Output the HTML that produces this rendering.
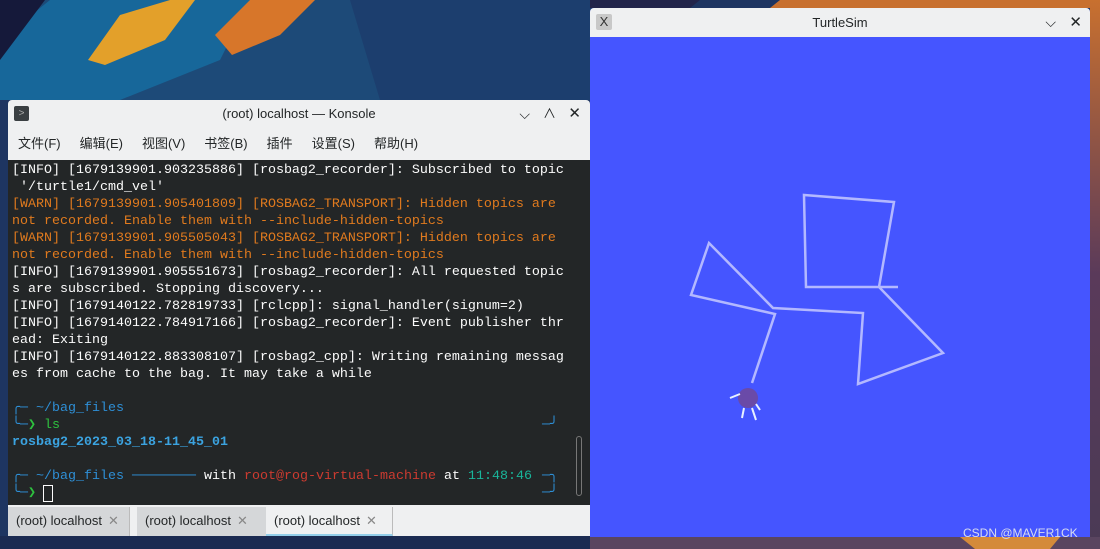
<!DOCTYPE html>
<html><head><meta charset="utf-8">
<style>
*{margin:0;padding:0;box-sizing:border-box}
body{width:1100px;height:549px;overflow:hidden;position:relative;background:#1c2f55;font-family:"Liberation Sans","Noto Sans CJK SC",sans-serif}
.bg{position:absolute;left:0;top:0}
.kon{position:absolute;left:8px;top:100px;width:582px;height:436px;background:#eff0f1;border-radius:4px 4px 0 0}
.tb{height:28px;position:relative;font-size:13px;color:#232627;text-align:center;line-height:28px}
.menu{height:32px;font-size:13px;color:#232627;line-height:32px;padding-left:10px}
.menu span{margin-right:19px}
.term{position:absolute;left:0;top:60px;width:582px;height:345px;background:#232627;font-family:"Liberation Mono",monospace;font-size:13.33px;line-height:17px;color:#fcfcfc;padding:2px 0 0 4px;white-space:pre}
.o{color:#e07a1e}.b{color:#2e8fd6}.g{color:#2ec23f}.bb{color:#3ba3e0;font-weight:bold}.r{color:#cc3b30}.t{color:#19b59a}
.ln{position:relative;height:17px}
.rc{position:absolute;left:530px;top:0;color:#2e8fd6}
.tabs{position:absolute;left:0;top:405px;width:582px;height:31px;background:#eff0f1;font-size:13px;color:#232627}
.tab{position:absolute;top:2px;height:29px;line-height:28px;padding-left:8px;background:#d5d7d9;border-right:1px solid #bbb}
.tab i{font-style:normal;color:#888;margin-left:6px}
.ts{position:absolute;left:590px;top:8px;width:500px;height:529px;background:#4555ff;border-radius:4px 4px 0 0;overflow:hidden}
.ts .tb{background:#eff0f1;height:29px;line-height:29px}
</style></head><body>
<svg class="bg" width="1100" height="549">
<defs><linearGradient id="rg" x1="0" y1="0" x2="0" y2="1"><stop offset="0" stop-color="#c8702f"/><stop offset="0.5" stop-color="#5a3a5a"/><stop offset="1" stop-color="#4a3a55"/></linearGradient></defs>
<rect width="1100" height="549" fill="#1e3561"/>
<polygon points="0,0 600,0 600,100 0,100" fill="#1d4a78"/>
<polygon points="0,40 50,0 250,0 220,60 120,100 0,100" fill="#17679a"/>
<polygon points="88,60 120,15 170,0 195,0 165,40 105,65" fill="#e3a02a"/>
<polygon points="215,35 250,0 315,0 280,35 232,55" fill="#d7762a"/>
<polygon points="0,0 45,0 0,60" fill="#15193a"/>
<polygon points="350,0 600,0 600,100 380,100" fill="#1c3e6e"/>
<polygon points="780,0 1100,0 1100,8 770,8" fill="#c8702f"/>
<polygon points="590,0 700,0 690,8 590,8" fill="#22244a"/>
<rect x="1090" y="0" width="10" height="549" fill="url(#rg)"/>
<rect x="590" y="537" width="510" height="12" fill="#5a4560"/>
<polygon points="960,537 1060,537 1050,549 975,549" fill="#d48a3a"/>
<rect x="0" y="536" width="590" height="13" fill="#1b2b52"/>
</svg>
<div class="kon">
 <div class="tb"><div style="position:absolute;left:6px;top:6px;width:15px;height:15px;background:#3a3f42;border-radius:2px;color:#aaa;font-size:10px;line-height:15px">&gt;</div>(root) localhost — Konsole
 <span style="position:absolute;right:60px;top:0;font-size:14px">⌵</span><span style="position:absolute;right:34px;top:0;font-size:13px">∧</span><span style="position:absolute;right:9px;top:0;font-size:15px">✕</span></div>
 <div class="menu"><span>文件(F)</span><span>编辑(E)</span><span>视图(V)</span><span>书签(B)</span><span>插件</span><span>设置(S)</span><span>帮助(H)</span></div>
 <div class="term">[INFO] [1679139901.903235886] [rosbag2_recorder]: Subscribed to topic
 '/turtle1/cmd_vel'
<span class="o">[WARN] [1679139901.905401809] [ROSBAG2_TRANSPORT]: Hidden topics are
not recorded. Enable them with --include-hidden-topics
[WARN] [1679139901.905505043] [ROSBAG2_TRANSPORT]: Hidden topics are
not recorded. Enable them with --include-hidden-topics</span>
[INFO] [1679139901.905551673] [rosbag2_recorder]: All requested topic
s are subscribed. Stopping discovery...
[INFO] [1679140122.782819733] [rclcpp]: signal_handler(signum=2)
[INFO] [1679140122.784917166] [rosbag2_recorder]: Event publisher thr
ead: Exiting
[INFO] [1679140122.883308107] [rosbag2_cpp]: Writing remaining messag
es from cache to the bag. It may take a while
<div class="ln"></div><div class="ln"><span class="b">╭─ ~/bag_files</span></div><div class="ln"><span class="b">╰─</span><span class="g">❯ ls</span><span class="rc">─╯</span></div><div class="ln"><span class="bb">rosbag2_2023_03_18-11_45_01</span></div><div class="ln"></div><div class="ln"><span class="b">╭─ ~/bag_files ────────</span> with <span class="r">root@rog-virtual-machine</span> at <span class="t">11:48:46</span><span class="rc">─╮</span></div><div class="ln"><span class="b">╰─</span><span class="g">❯</span> <span style="outline:1px solid #fcfcfc"> </span><span class="rc">─╯</span></div></div>
 <div style="position:absolute;left:568px;top:336px;width:6px;height:60px;border:1px solid #777;border-radius:3px"></div>
 <div class="tabs">
  <div class="tab" style="left:0;width:122px">(root) localhost<i>✕</i></div>
  <div class="tab" style="left:129px;width:130px">(root) localhost<i>✕</i></div>
  <div class="tab" style="left:258px;width:127px;background:#eff0f1;border-bottom:2px solid #93cee9">(root) localhost<i>✕</i></div>
 </div>
</div>
<div class="ts">
 <div class="tb" style="position:relative"><div style="position:absolute;left:6px;top:6px;width:16px;height:16px;background:#c8c8c8;border-radius:2px;font-size:13px;line-height:16px;color:#333">X</div>TurtleSim
 <span style="position:absolute;right:34px;top:0;font-size:14px">⌵</span><span style="position:absolute;right:8px;top:0;font-size:15px">✕</span></div>
 <svg width="500" height="500" style="position:absolute;left:0;top:29px">
  <g transform="translate(-590,-37)" fill="none" stroke="#b3b8ff" stroke-width="2.5">
   <polyline points="898,287 806,287 804,195 894,202 879,287 943,353 858,384 863,313 773,308 709,243 691,295 775,314 752,383"/>
   <circle cx="748" cy="398" r="10" fill="#6a4aa8" stroke="none"/>
   <path d="M740,394 L730,398 M756,404 L760,410 M744,408 L742,418 M752,408 L756,420" stroke="#e8f0ff" stroke-width="2"/>
  </g>
 </svg>
</div>
<div style="position:absolute;left:963px;top:526px;font-size:12px;color:#d8dcf0">CSDN @MAVER1CK</div>
</body></html>
